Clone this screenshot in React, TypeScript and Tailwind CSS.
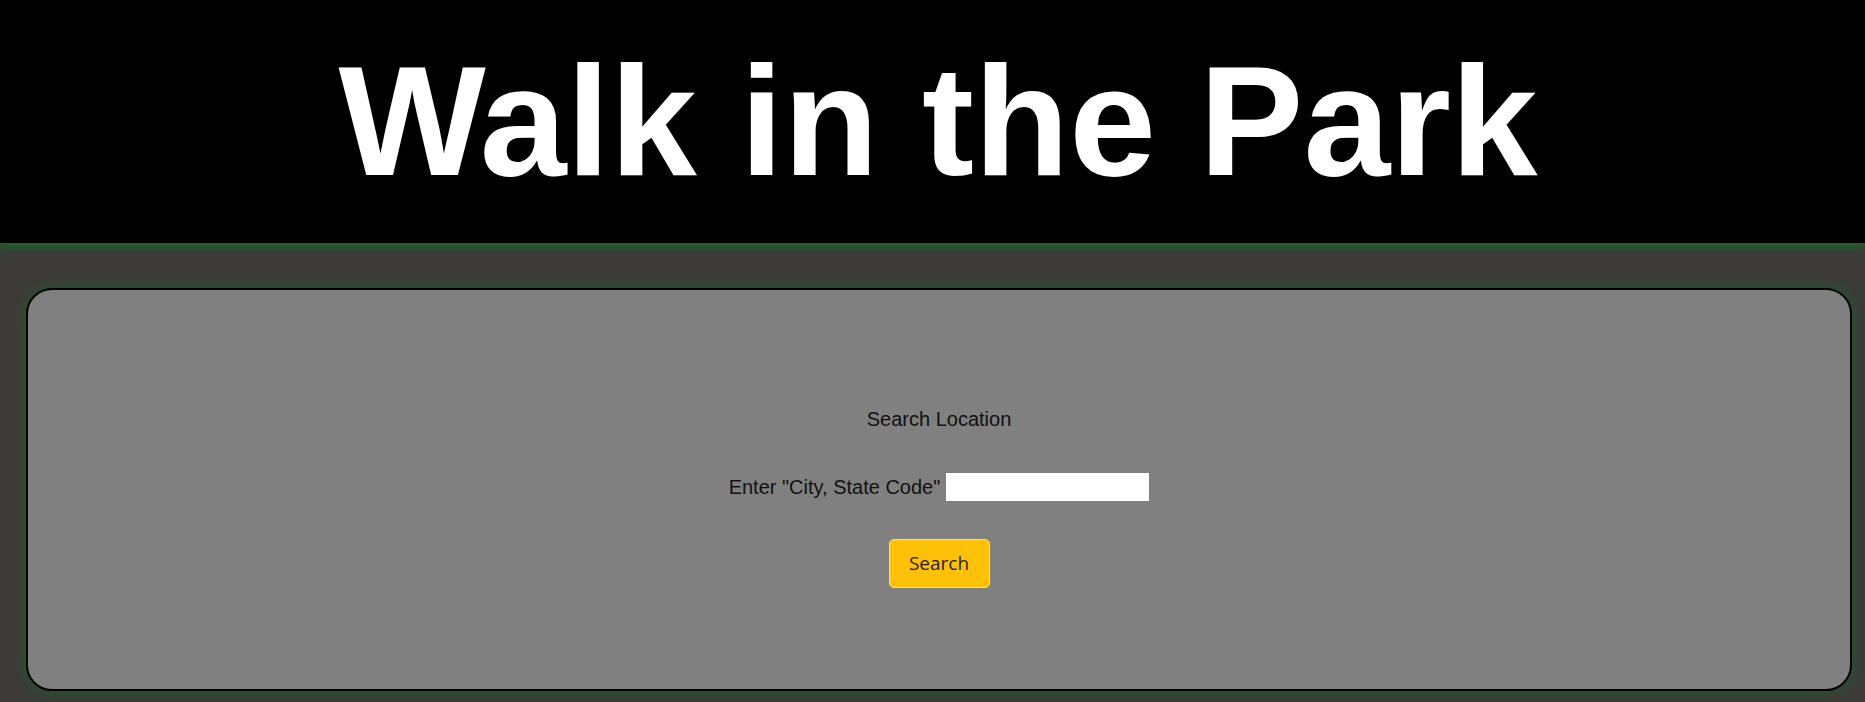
import React from "react";

export default function App() {
  return (
    <div className="min-h-screen bg-[#3c3b38]" style={{ fontFamily: '"Liberation Sans", Arial, sans-serif' }}>
      <header className="relative z-10 h-[243px] bg-black pt-[43px] shadow-[0_4px_8px_#17692a] text-center">
        <h1 className="text-[156px] leading-[156px] font-bold text-white pl-[11px]" style={{ fontFamily: '"Liberation Sans", Arial, sans-serif' }}>
          Walk in the Park
        </h1>
      </header>
      <main className="pt-[45px] pl-[26px] pr-[13px] pb-[11px]">
        <section className="h-[403px] rounded-[26px] border-2 border-black bg-[#808080] shadow-[0_0_14px_#1b5e2b] flex flex-col items-center pt-[118px]">
          <p className="text-[20px] leading-[23px] text-[#111]">Search Location</p>
          <div className="mt-[42px] flex items-center gap-[6px]">
            <label className="text-[20px] leading-[23px] text-[#111]">Enter "City, State Code"</label>
            <input type="text" className="w-[203px] h-[28px] bg-white border-0 outline-none" />
          </div>
          <button
            className="mt-[38px] w-[101px] h-[49px] rounded-[5px] border border-[#ffdf80] bg-[#ffc107] text-[19px] text-[#2a1e00]"
            style={{ fontFamily: '"Open Sans", "Noto Sans", sans-serif' }}
          >
            Search
          </button>
        </section>
      </main>
    </div>
  );
}
